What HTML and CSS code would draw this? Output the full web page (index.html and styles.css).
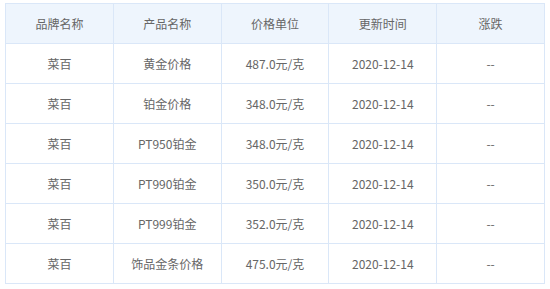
FILE: index.html
```html
<!DOCTYPE html>
<html lang="zh">
<head>
<meta charset="utf-8">
<link rel="stylesheet" href="styles.css">
</head>
<body>
<div class="wrap">
<table class="price-table">
  <thead>
    <tr><th>品牌名称</th><th>产品名称</th><th>价格单位</th><th>更新时间</th><th>涨跌</th></tr>
  </thead>
  <tbody>
    <tr><td>菜百</td><td>黄金价格</td><td>487.0元/克</td><td>2020-12-14</td><td>--</td></tr>
    <tr><td>菜百</td><td>铂金价格</td><td>348.0元/克</td><td>2020-12-14</td><td>--</td></tr>
    <tr><td>菜百</td><td>PT950铂金</td><td>348.0元/克</td><td>2020-12-14</td><td>--</td></tr>
    <tr><td>菜百</td><td>PT990铂金</td><td>350.0元/克</td><td>2020-12-14</td><td>--</td></tr>
    <tr><td>菜百</td><td>PT999铂金</td><td>352.0元/克</td><td>2020-12-14</td><td>--</td></tr>
    <tr><td>菜百</td><td>饰品金条价格</td><td>475.0元/克</td><td>2020-12-14</td><td>--</td></tr>
  </tbody>
</table>
</div>
</body>
</html>
```
FILE: styles.css
```css
html, body {
  margin: 0;
  padding: 0;
  background: #ffffff;
}
.wrap {
  padding: 3px 0 0 5px;
}
.price-table {
  border-collapse: collapse;
  width: 540px;
  table-layout: fixed;
  font-family: "Microsoft YaHei", "Noto Sans CJK SC", "Noto Sans", sans-serif;
  font-size: 12px;
  color: #666666;
}
.price-table th,
.price-table td {
  border: 1px solid #dae7f8;
  height: 39px;
  padding: 0;
  text-align: center;
  vertical-align: middle;
  font-weight: normal;
}
.price-table th {
  background: #eef5fd;
}
```
